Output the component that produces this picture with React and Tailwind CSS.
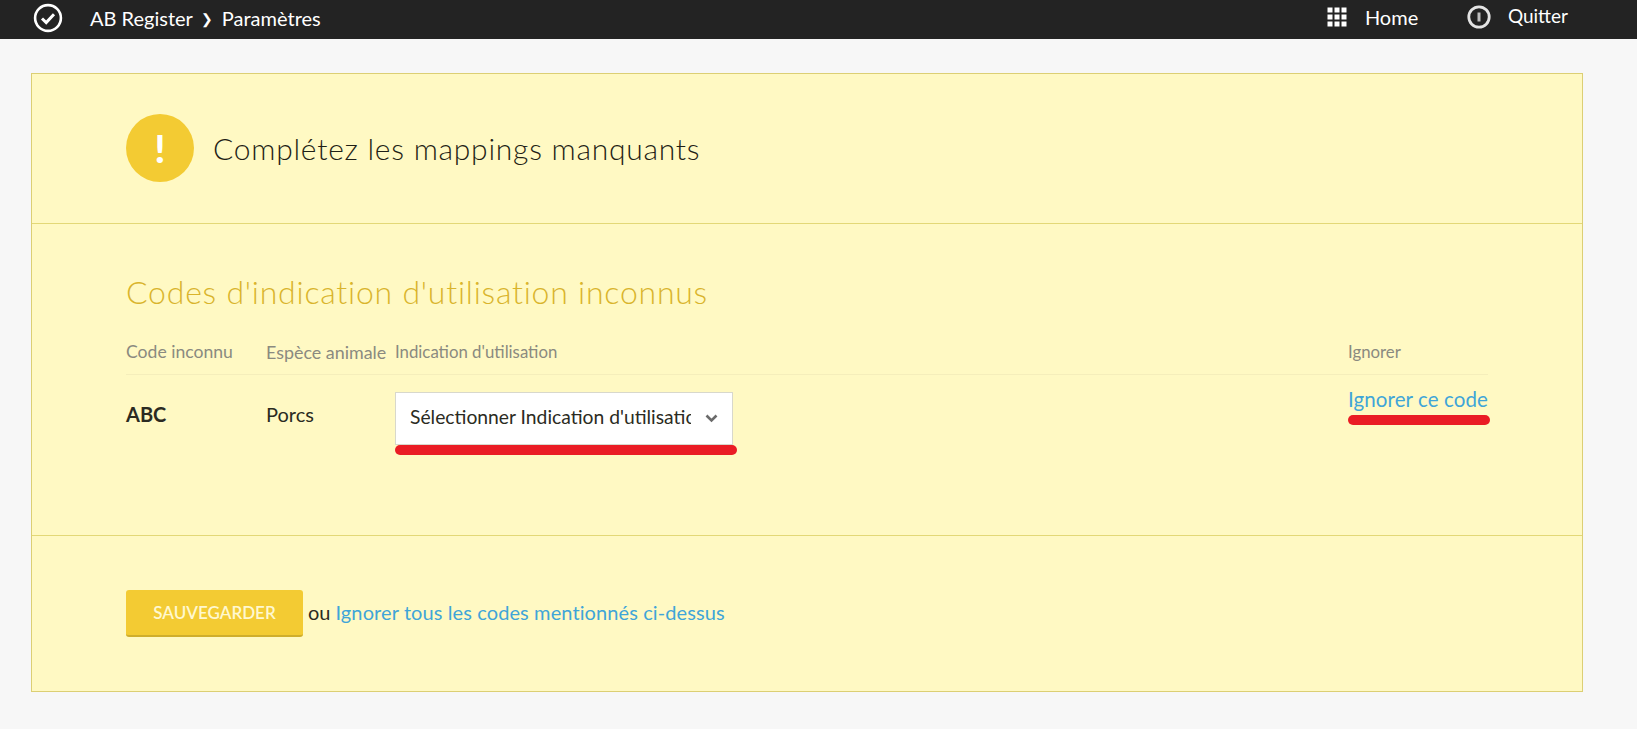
// App.jsx
import React from 'react';

const CheckLogo = () => (
  <svg width="30" height="30" viewBox="0 0 30 30" fill="none" stroke="#fff">
    <circle cx="15" cy="15" r="12.9" strokeWidth="2.6" />
    <path d="M9 15.5l4.2 4L21 11.2" strokeWidth="3" />
  </svg>
);

const GridIcon = () => (
  <svg width="20" height="20" viewBox="0 0 20 20" fill="#fff">
    {[0, 7, 14].map((y) =>
      [0, 7, 14].map((x) => <rect key={`${x}-${y}`} x={x + 0.5} y={y + 0.5} width="5" height="5" />)
    )}
  </svg>
);

const QuitIcon = () => (
  <svg width="24" height="24" viewBox="0 0 24 24" fill="none" stroke="#e4e4e4">
    <circle cx="12" cy="12" r="10.2" strokeWidth="2.8" />
    <path d="M12 7.5v9" strokeWidth="3" stroke="#bdbdbd" />
  </svg>
);

const Chevron = () => (
  <svg width="13" height="9" viewBox="0 0 13 9" fill="none" stroke="#6b6b6b" strokeWidth="2.6">
    <path d="M1.5 1.5L6.5 6.5l5-5" />
  </svg>
);

const App = () => {
  return (
    <div className="min-h-[729px] bg-[#f7f7f7] font-['Lato','Open_Sans',sans-serif] text-[#2b2b22]">
      {/* Барра */}
      <header className="h-[39px] bg-[#232323] flex items-center text-white">
        <div className="ml-[33px] w-[57px] -mt-[4px]">
          <CheckLogo />
        </div>
        <div className="flex items-center text-[20px] -mt-[3px]">
          <span>AB Register</span>
          <span className="ml-[8px] mr-[9px] text-[14px]">❯</span>
          <span>Paramètres</span>
        </div>
        <div className="ml-auto flex items-center -mt-[6px]">
          <GridIcon />
          <span className="ml-[18px] w-[102px] text-[20px]">Home</span>
          <QuitIcon />
          <span className="ml-[17px] mr-[69px] text-[19px]">Quitter</span>
        </div>
      </header>

      <main className="pt-[34px] pl-[31px] pr-[54px]">
        <div className="bg-[#fff9c3] border border-[#dccf74]">
          {/* Заголовок */}
          <section className="h-[150px] pl-[94px] flex items-center gap-[19px] border-b border-[#e3d877]">
            <div className="w-[68px] h-[68px] rounded-full bg-[#f3cb33] flex items-center justify-center text-white font-black text-[38px] -mt-[1px]">
              !
            </div>
            <h1 className="text-[30px] font-light tracking-[0.75px] text-[#1f1f16] -mt-[1px]">Complétez les mappings manquants</h1>
          </section>

          {/* Таблица */}
          <section className="h-[312px] pl-[94px] pt-[49px] border-b border-[#e3d877]">
            <h2 className="text-[32px] leading-[38px] text-[#d9b42c] font-light tracking-[0.77px]">
              Codes d'indication d'utilisation inconnus
            </h2>
            <div className="w-[1362px] mt-[25px] h-[39px] border-b border-[#f5eebb] flex text-[16.8px] text-[#8a8a80] leading-[24px] pt-[4px]">
              <div className="w-[140px] text-[17.6px]">Code inconnu</div>
              <div className="w-[129px] text-[17.9px] whitespace-nowrap">Espèce animale</div>
              <div className="w-[953px]">Indication d'utilisation</div>
              <div>Ignorer</div>
            </div>
            <div className="w-[1362px] flex items-start text-[20px] pt-[17px]">
              <div className="w-[140px] font-bold pt-[7px]">ABC</div>
              <div className="w-[129px] pt-[7px]">Porcs</div>
              <div className="w-[953px] relative">
                <div className="w-[338px] h-[53px] bg-white border border-[#d8d8cc] flex items-center pl-[14px] pr-[14px]">
                  <span className="w-[281px] overflow-hidden whitespace-nowrap text-[19.3px] -mt-[3px]">Sélectionner Indication d'utilisation</span>
                  <span className="ml-auto flex">
                    <Chevron />
                  </span>
                </div>
                <div className="absolute left-0 top-[53px] w-[342px] h-[10px] rounded-full bg-[#ea1c24]" />
              </div>
              <div className="relative text-[#3fa5d8] -mt-[8px]">
                <a className="whitespace-nowrap block text-[20.5px] tracking-[0.1px]">Ignorer ce code</a>
                <div className="absolute left-0 top-[31px] w-[142px] h-[10px] rounded-full bg-[#ea1c24]" />
              </div>
            </div>
          </section>

          {/* Действия */}
          <section className="h-[155px] pl-[94px] pt-[54px] flex items-start text-[20px]">
            <button className="w-[177px] h-[47px] rounded-[3px] bg-[#f3cb33] border-b-2 border-[#cfae2c] text-[#fff8cf] font-semibold text-[17px] uppercase">
              Sauvegarder
            </button>
            <span className="ml-[5px] mt-[7px]">ou</span>
            <a className="ml-[5px] mt-[7px] text-[#3fa5d8] tracking-[0.1px]">Ignorer tous les codes mentionnés ci-dessus</a>
          </section>
        </div>
      </main>
    </div>
  );
};

export default App;
